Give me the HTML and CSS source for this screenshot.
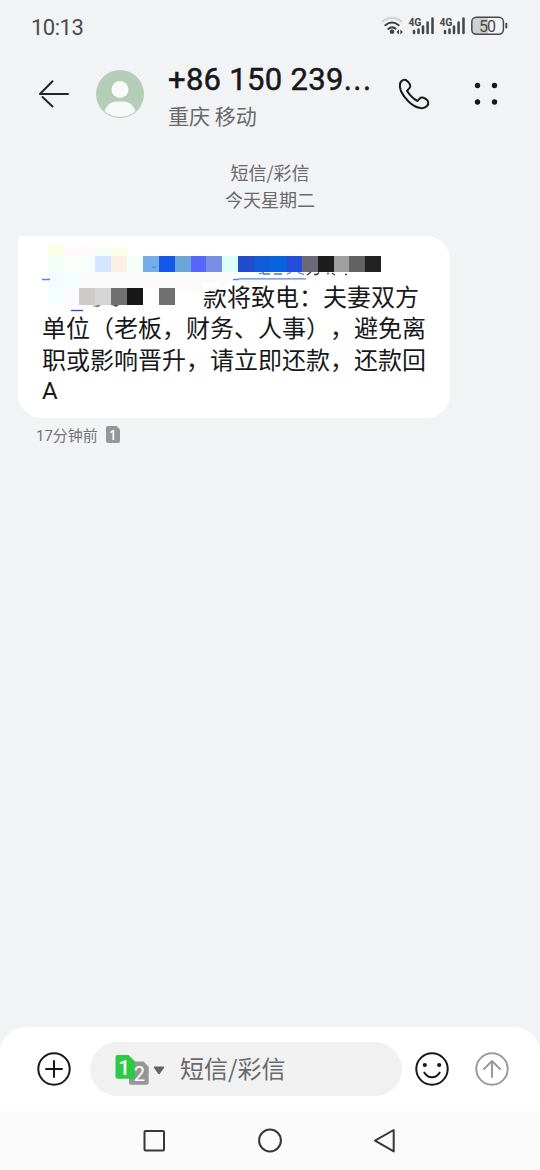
FILE: index.html
```html
<!DOCTYPE html>
<html lang="zh-CN">
<head>
<meta charset="utf-8">
<title>短信/彩信</title>
<link rel="stylesheet" href="styles.css">
</head>
<body>
<div class="screen">
  <div class="status">
    <span class="clock">10:13</span>
    <svg class="status-icons" width="130" height="24" viewBox="380 14 130 24">
      <g fill="none" stroke-width="2" stroke-linecap="round">
        <path d="M382.500 21.500Q392 14 401.500 21.500" stroke="#cfd0d2"/>
        <path d="M385.300 25.200Q392 19.800 398.700 25.200M388.200 29Q392 26 395.600 28.600" stroke="#3f4042"/>
      </g>
      <circle cx="392" cy="31.800" r="2.300" fill="#3f4042"/>
      <path d="M399 29.500v5l-2.500-2.500zM400.300 29.500v5l2.500-2.500z" fill="#3f4042"/>
      <g stroke="#454648" stroke-width="2.500" stroke-linecap="round">
        <path d="M414 31v2M418.500 29.500v3.500M423 26.500v6.500M427.600 22.500v10.500M432.500 18.500v14.500"/>
        <path d="M445 31v2M449.500 29.500v3.500M454 26.500v6.500M458.600 22.500v10.500M463.500 18.500v14.500"/>
      </g>
      <text class="net" x="408.500" y="25.800" textLength="13">4G</text>
      <text class="net" x="439.500" y="25.800" textLength="13">4G</text>
      <path d="M476 17.500h12v17h-12a4 4 0 0 1-4-4v-9a4 4 0 0 1 4-4z" fill="#cfd0d2"/>
      <rect x="471.800" y="17.200" width="31.600" height="17" rx="4.500" fill="none" stroke="#48494b" stroke-width="1.500"/>
      <path d="M506.300 23.800v3.700" stroke="#48494b" stroke-width="2" stroke-linecap="round"/>
      <text class="level" x="479" y="31.500" textLength="17">50</text>
    </svg>
  </div>

  <header class="header">
    <svg class="back" width="34" height="32" viewBox="37 78 34 32" fill="none" stroke="#242527" stroke-width="2" stroke-linecap="round" stroke-linejoin="round"><path d="M68 94H40L52.500 81.300M42.500 97L52.500 106.500"/></svg>
    <svg class="avatar" width="48" height="48" viewBox="0 0 48 48">
      <circle cx="24" cy="24" r="24" fill="#b5cdb8"/>
      <circle cx="24" cy="19.500" r="8.500" fill="#f7faf7"/>
      <path d="M8.500 41C11 35 15 31.500 20 31.500h8c5 0 9 3.500 11.500 9.500C31 48.800 17 48.800 8.500 41z" fill="#f7faf7"/>
    </svg>
    <div class="contact">
      <div class="number">+86 150 239<span class="dots">...</span></div>
      <div class="region">重庆 移动</div>
    </div>
    <svg class="call" width="32" height="32" viewBox="398 78 32 32" fill="none" stroke="#17181a" stroke-width="2" stroke-linejoin="round"><path d="M403.500 79.900C399.600 81 398.900 86 400.900 91C404.300 98.500 412.500 107 420.800 108.100C425.800 108.600 429 105 428.200 102C427.500 99.500 423.500 97 421.300 97.500C419.800 97.900 419 99.500 417.500 101C413.500 98.800 409.200 94.500 407 90.700C408.500 89.300 410.200 88.200 410.300 86.300C410.400 83.900 406.700 79 403.500 79.900z"/></svg>
    <svg class="more" width="26" height="26" viewBox="473 81 26 26" fill="#17181a"><circle cx="477.500" cy="85.500" r="2.700"/><circle cx="494.500" cy="85.500" r="2.700"/><circle cx="477.500" cy="102" r="2.700"/><circle cx="494.500" cy="102" r="2.700"/></svg>
  </header>

  <main class="thread">
    <div class="stamp">短信/彩信<br>今天星期二</div>
    <div class="bubble">
      <div class="line tail">款将致电：夫妻双方</div>
      <div class="line">单位（老板，财务、人事），避免离</div>
      <div class="line">职或影响晋升，请立即还款，还款回</div>
      <div class="line latin">A</div>
      <svg class="mosaic" width="380" height="80" viewBox="38 240 380 80">
        <path d="M48 272H237L222 288.500 205 292H48z" fill="#fbfbfc"/>
        <path d="M203 283h17v5l-14 4h-3z" fill="#fff"/>
        <g shape-rendering="crispEdges">
          <path fill="#fbffe8" d="M48 245h16v11H48zM111 248h16v8h-16z"/>
          <path fill="#fff9fb" d="M64 247h31v9H64z"/>
          <path fill="#f4fff8" d="M95 248h16v8H95zM48 256h16v16H48zM127 256h16v16h-16z"/>
          <path fill="#fafffc" d="M64 256h31v16H64z"/>
          <path fill="#d3e5ff" d="M95 256h16v16H95z"/>
          <path fill="#faf0e3" d="M111 256h16v16h-16z"/>
          <path fill="#75adeb" d="M143 256h16v16h-16z"/>
          <path fill="#1459e9" d="M159 256h16v16h-16z"/>
          <path fill="#6ca5d8" d="M175 256h16v16h-16z"/>
          <path fill="#5865ff" d="M191 256h15v16h-15z"/>
          <path fill="#788fe4" d="M206 256h16v16h-16z"/>
          <path fill="#dcfff8" d="M222 256h16v16h-16z"/>
          <path fill="#234ccd" d="M238 256h16v16h-16z"/>
          <path fill="#135cd8" d="M254 256h16v16h-16z"/>
          <path fill="#0863e1" d="M270 256h16v16h-16z"/>
          <path fill="#234edc" d="M286 256h16v16h-16z"/>
          <path fill="#6a6977" d="M302 256h16v16h-16z"/>
          <path fill="#1d1d1d" d="M318 256h16v16h-16z"/>
          <path fill="#a0a0a0" d="M334 256h15v16h-15z"/>
          <path fill="#636363" d="M349 256h16v16h-16z"/>
          <path fill="#222" d="M365 256h16v16h-16z"/>
          <path fill="#f6fbff" d="M48 272h16v16H48z"/>
          <path fill="#f5fffe" d="M64 272h16v15H64zM48 288h16v17H48z"/>
          <path fill="#fdfbff" d="M64 288h15v17H64z"/>
          <path fill="#cfcbc7" d="M79 288h16v17H79z"/>
          <path fill="#d5d5d5" d="M95 288h16v17H95z"/>
          <path fill="#717171" d="M111 288h16v17h-16zM159 288h16v17h-16z"/>
          <path fill="#171717" d="M127 288h16v17h-16z"/>
          <path fill="#fff" d="M143 288h16v17h-16z"/>
        </g>
        <g fill="none" stroke="#4f86dc" stroke-width="1.300">
          <path d="M42 279.500h8M233 279.500h6M239 278.800h67"/>
          <path d="M71 310.500h12" stroke="#1c4edb"/>
          <path d="M259 274l5-1.500M263 274h7M274 274h8M287 274l4-1.500M298 272.500l6 2" stroke="#3e72e6"/>
          <path d="M307 275l4-3M314 274.500h3l2-2M328 272.500v2M332 273l3 2M345 274.500h2" stroke="#333"/>
        </g>
        <path d="M92 306l9-1-3 2zM112 305h7l-3 2z" fill="#555"/>
        <path d="M152 267l4 .5" stroke="#3c88dd"/>
      </svg>
    </div>
    <div class="meta">
      <span>17分钟前</span>
      <svg width="14" height="17" viewBox="0 0 14 17"><path d="M2 0h8.500L14 3.500V15a2 2 0 0 1-2 2H2a2 2 0 0 1-2-2V2a2 2 0 0 1 2-2z" fill="#969798"/><text class="sim-small" x="2.800" y="13.600">1</text></svg>
    </div>
  </main>

  <div class="composer">
    <svg class="add" width="34" height="34" viewBox="0 0 34 34" fill="none" stroke="#17181a" stroke-width="2" stroke-linecap="round"><circle cx="17" cy="17" r="15.700"/><path d="M9 17h16M17 9v16"/></svg>
    <div class="field">
      <svg class="sims" width="50" height="31" viewBox="115 1053 50 31">
        <path d="M131 1060.500h12.500l5.200 5.200v16a2 2 0 0 1-2 2H131a2 2 0 0 1-2-2v-19z" fill="#969697"/>
        <path d="M117.500 1054h11l6.500 6.500v15.200a2 2 0 0 1-2 2h-15.500a2 2 0 0 1-2-2V1056a2 2 0 0 1 2-2z" fill="#2bcb42"/>
        <text class="sim" x="118.300" y="1073.800">1</text>
        <text class="sim two" x="133.800" y="1080.200">2</text>
        <path d="M154.500 1066.300h9l-4.500 6.200z" fill="#646464" stroke="#646464" stroke-width="1.500" stroke-linejoin="round"/>
      </svg>
      <span class="placeholder">短信/彩信</span>
    </div>
    <svg class="smile" width="34" height="34" viewBox="0 0 34 34" fill="none" stroke="#17181a" stroke-width="2" stroke-linecap="round"><circle cx="17" cy="17" r="15.700"/><path d="M9.300 20.500C13 26.800 21 26.800 24.700 20.500"/><circle cx="9.800" cy="13" r="1.100" fill="#17181a"/><circle cx="24.200" cy="13" r="1.100" fill="#17181a"/></svg>
    <svg class="send" width="34" height="34" viewBox="0 0 34 34" fill="none" stroke="#9b9b9b" stroke-width="2" stroke-linecap="round" stroke-linejoin="round"><circle cx="17" cy="17" r="15.700"/><path d="M17 25V9M9 17l8-8 8 8"/></svg>
  </div>

  <nav class="nav">
    <svg width="24" height="26" viewBox="0 0 24 26"><rect x="2.500" y="3" width="19.500" height="19.500" rx="1" /></svg>
    <svg width="26" height="26" viewBox="0 0 26 26"><circle cx="13" cy="12.500" r="10.900"/></svg>
    <svg width="24" height="26" viewBox="0 0 24 26"><path d="M1 12.700L19.700 2v21.400z"/></svg>
  </nav>
</div>
</body>
</html>
```

FILE: styles.css
```css
body {
  margin: 0;
  font-family: "Noto Sans CJK SC", sans-serif;
  background: #f1f3f5;
}
.screen {
  width: 540px;
  height: 1170px;
  display: flex;
  flex-direction: column;
  overflow: hidden;
}
.status {
  height: 50px;
  box-sizing: border-box;
  padding: 14px 30px 0 31px;
  display: flex;
  justify-content: space-between;
  align-items: flex-start;
}
.clock {
  font: 22px/27px Roboto, sans-serif;
  letter-spacing: -0.5px;
  color: #4b4c4e;
}
.net {
  font: 700 10.500px Roboto, sans-serif;
  fill: #454648;
  stroke: #f1f3f5;
  stroke-width: 2px;
  paint-order: stroke;
}
.level {
  font: 16px Roboto, sans-serif;
  fill: #48494b;
}
.header {
  height: 88px;
  display: flex;
  align-items: center;
  padding-left: 37px;
}
.avatar { margin-left: 25px; }
.contact {
  width: 206px;
  margin-left: 24px;
  padding-top: 4px;
}
.number {
  font: 31px/38px Roboto, sans-serif;
  letter-spacing: 0.300px;
  -webkit-text-stroke: 0.500px #17181a;
  color: #17181a;
  white-space: nowrap;
}
.dots { letter-spacing: 1.500px; }
.region {
  font-size: 21px;
  line-height: 33px;
  color: #68696b;
}
.call { margin-left: 24px; }
.more { margin-left: 43px; }
.thread { flex: 1; }
.stamp {
  padding-top: 21px;
  text-align: center;
  font-size: 18px;
  line-height: 27px;
  color: #68696b;
}
.bubble {
  position: relative;
  width: 432px;
  height: 182px;
  box-sizing: border-box;
  margin: 23px 0 0 18px;
  padding: 43.500px 20px 0 24px;
  border-radius: 5px 24px 24px 24px;
  background: #fff;
}
.line {
  font-size: 24px;
  line-height: 31.600px;
  color: #17181a;
  white-space: nowrap;
  text-spacing-trim: space-all;
}
.tail { padding-left: 161px; }
.latin {
  padding-top: 2px;
  font-family: Roboto, sans-serif;
}
.mosaic {
  position: absolute;
  left: 20px;
  top: 4px;
}
.meta {
  display: flex;
  align-items: center;
  gap: 8px;
  margin: 4px 0 0 36px;
  height: 24px;
  font-family: Roboto, "Noto Sans CJK SC", sans-serif;
  font-size: 15px;
  color: #737476;
}
.sim-small {
  font: 500 14px "Noto Sans", sans-serif;
  fill: #fff;
}
.composer {
  height: 84px;
  display: flex;
  align-items: center;
  padding-left: 37px;
  border-radius: 26px 26px 0 0;
  background: #fff;
}
.field {
  width: 312px;
  height: 54px;
  box-sizing: border-box;
  margin-left: 19px;
  padding-left: 25px;
  display: flex;
  align-items: center;
  gap: 15px;
  border-radius: 27px;
  background: #f1f1f1;
}
.sim {
  font: 500 21px Roboto, sans-serif;
  fill: #fff;
}
.two { font-size: 20px; font-weight: 400; }
.placeholder {
  padding-bottom: 3px;
  font-size: 24px;
  color: #68696a;
}
.smile { margin-left: 13px; }
.send { margin-left: 26px; }
.nav {
  height: 59px;
  display: flex;
  align-items: center;
  justify-content: center;
  gap: 91px;
  background: #fbfbfb;
  fill: none;
  stroke: #36373a;
  stroke-width: 2;
  stroke-linejoin: round;
}
```
